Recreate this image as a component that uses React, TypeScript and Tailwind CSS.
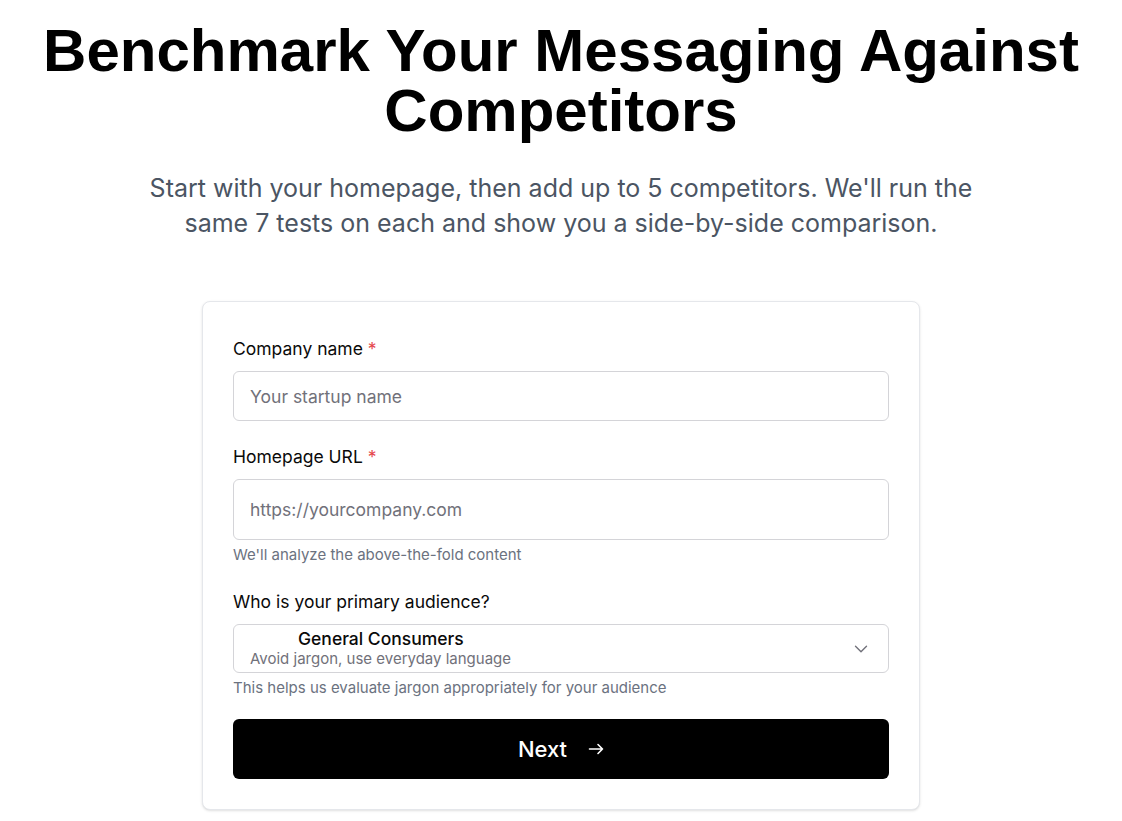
import { ChevronDown } from "lucide-react";

const Label = ({ text, required }: { text: string; required?: boolean }) => (
  <label className="block text-[17.5px] leading-6 font-normal text-[#0a0a0a]">
    {text}
    {required && <span className="text-[#e5484d]"> *</span>}
  </label>
);

const App = () => {
  return (
    <div className="min-h-screen bg-white font-['Inter',sans-serif] flex flex-col items-center px-4 pt-[21px] pb-10">
      <h1 className="text-center font-['Liberation_Sans',Arial,sans-serif] font-bold text-6xl leading-none text-black">
        Benchmark Your Messaging Against Competitors
      </h1>
      <p className="mt-[30px] max-w-[860px] text-center text-[25px] leading-[35px] text-[#4b5563]">
        Start with your homepage, then add up to 5 competitors. We'll run the same 7 tests on each
        and show you a side-by-side comparison.
      </p>

      <div className="mt-[60px] w-[718px] rounded-lg border border-[#e5e7eb] bg-white px-[30px] pt-[35px] pb-[30px] shadow-sm">
        <Label text="Company name" required />
        <input
          placeholder="Your startup name"
          className="mt-[10px] block w-full h-[50px] rounded-md border border-[#d4d4d8] px-4 text-[17.5px] text-black placeholder:text-[#71717a] outline-none"
        />

        <div className="mt-6">
          <Label text="Homepage URL" required />
        </div>
        <input
          placeholder="https://yourcompany.com"
          className="mt-[10px] block w-full h-[61px] rounded-md border border-[#d4d4d8] px-4 text-[17.5px] text-black placeholder:text-[#71717a] outline-none"
        />
        <p className="mt-[5px] text-[15px] leading-5 text-[#6b7280]">We'll analyze the above-the-fold content</p>

        <div className="mt-[25px]">
          <Label text="Who is your primary audience?" />
        </div>
        <button className="mt-[10px] flex w-full h-[49px] items-center justify-between rounded-md border border-[#d4d4d8] px-4 text-left">
          <div className="flex flex-col">
            <span className="flex text-[17.5px] leading-5 font-medium text-[#0a0a0a]">
              <span className="w-12" />
              General Consumers
            </span>
            <span className="text-[15px] leading-[19px] text-[#71717a]">Avoid jargon, use everyday language</span>
          </div>
          <ChevronDown size={22} strokeWidth={1.5} className="text-[#71717a]" />
        </button>
        <p className="mt-[5px] text-[15px] leading-5 text-[#6b7280]">
          This helps us evaluate jargon appropriately for your audience
        </p>

        <button className="mt-[21px] flex w-full h-[60px] items-center justify-center gap-[21px] rounded-md bg-black text-white text-[22px] font-medium">
          <span>Next</span>
          <svg width="16" height="16" viewBox="0 0 16 16" fill="none" stroke="currentColor" strokeWidth="1.6" strokeLinecap="round" strokeLinejoin="round">
            <path d="M1.5 8h13M10 3.5 14.5 8 10 12.5" />
          </svg>
        </button>
      </div>
    </div>
  );
};

export default App;
